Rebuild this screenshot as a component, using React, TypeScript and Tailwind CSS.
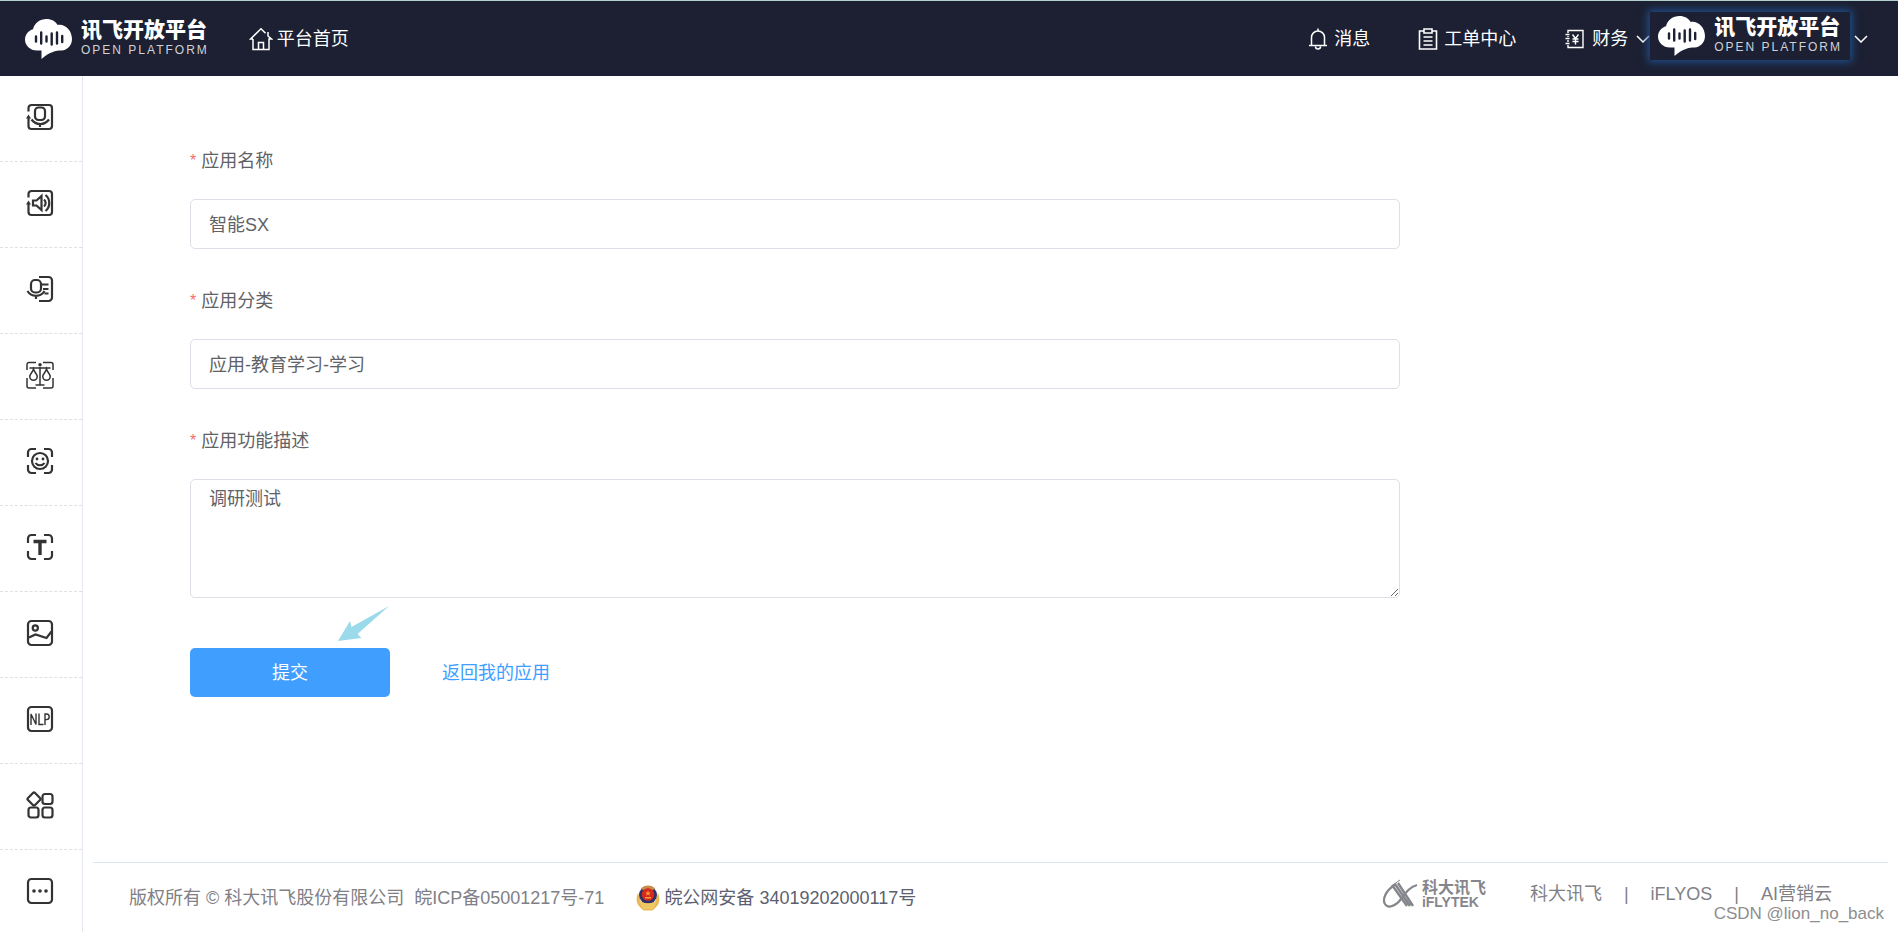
import { useState } from 'react';
import type { ReactNode } from 'react';

const sidebarIcons: { label: string; icon: ReactNode }[] = [
  {
    label: '语音识别',
    icon: (
      <>
        <path d="M2.5 8.5V5a3 3 0 0 1 3-3H23a3 3 0 0 1 3 3v18a3 3 0 0 1-3 3H5.5a3 3 0 0 1-3-3V14" />
        <path d="M0 15.500h5L2.500 11.500z" fill="currentColor" stroke="none" />
        <rect x="9" y="4.500" width="10" height="12.500" rx="3.500" />
        <path d="M5.5 16.5c4.5 6 13 6 17.500 0M14 21v3" />
      </>
    ),
  },
  {
    label: '语音合成',
    icon: (
      <>
        <path d="M2.5 8.5V5a3 3 0 0 1 3-3H23a3 3 0 0 1 3 3v18a3 3 0 0 1-3 3H5.5a3 3 0 0 1-3-3V14" />
        <path d="M0 15.500h5L2.500 11.500z" fill="currentColor" stroke="none" />
        <path d="M7 11.500h3.500l5-4.500v14l-5-4.500H7z" />
        <path d="M18 10.500c2.200 2 2.200 5 0 7M19.500 6c5 4 5 12 0 16" />
      </>
    ),
  },
  {
    label: '语音扩展',
    icon: (
      <>
        <path d="M13 2h9.500A3.500 3.500 0 0 1 26 5.500v17a3.500 3.500 0 0 1-3.500 3.500H13" />
        <rect x="5" y="5" width="10" height="12.500" rx="4" />
        <path d="M1.500 16c4 6.500 13 6.500 17 0M10 20.500V24M16 9.500h6.500M17 14h5.500M18.500 18.500h4" />
      </>
    ),
  },
  {
    label: '评测',
    icon: (
      <g strokeWidth="1.500">
        <path d="M1 9V3.500a2 2 0 0 1 2-2h7M17 1.500h8a2 2 0 0 1 2 2V9M27 17v8a2 2 0 0 1-2 2h-8M10 27H3a2 2 0 0 1-2-2v-8" />
        <path d="M3.500 7h21M14 6v18M9.500 24h9" />
        <circle cx="14" cy="3.700" r="1" fill="currentColor" />
        <path d="M7.500 8c-1 3.500-3.700 5-3.700 7.500a3.700 3.700 0 0 0 7.400 0C11.200 13 8.500 11.500 7.500 8zM20.500 8c-1 3.500-3.700 5-3.700 7.500a3.700 3.700 0 0 0 7.400 0C24.200 13 21.500 11.500 20.500 8z" />
      </g>
    ),
  },
  {
    label: '人脸识别',
    icon: (
      <>
        <path d="M2 10V5.500A3.500 3.500 0 0 1 5.500 2H10M18 2h4.500A3.500 3.500 0 0 1 26 5.500V10M26 18v4.500a3.500 3.500 0 0 1-3.500 3.500H18M10 26H5.500A3.500 3.500 0 0 1 2 22.500V18" />
        <circle cx="14" cy="14" r="8" />
        <path d="M9.500 16c2 3 7 3 9 0" />
        <circle cx="11" cy="12" r="1.400" fill="currentColor" stroke="none" />
        <circle cx="17" cy="12" r="1.400" fill="currentColor" stroke="none" />
      </>
    ),
  },
  {
    label: '文字识别',
    icon: (
      <>
        <path d="M2 10V5.500A3.500 3.500 0 0 1 5.500 2H10M18 2h4.500A3.500 3.500 0 0 1 26 5.500V10M26 18v4.500a3.500 3.500 0 0 1-3.500 3.500H18M10 26H5.500A3.500 3.500 0 0 1 2 22.500V18" />
        <path d="M7.500 8.500h13M14 9v13" strokeWidth="3.400" />
      </>
    ),
  },
  {
    label: '图像识别',
    icon: (
      <>
        <rect x="2" y="2" width="24" height="24" rx="3.500" />
        <circle cx="9.300" cy="9" r="2.600" />
        <path d="M3 18.500l6.500-3L20.500 19l5-6.500" />
      </>
    ),
  },
  {
    label: '自然语言处理',
    icon: (
      <>
        <rect x="2" y="2" width="24" height="24" rx="3.500" />
        <path
          d="M5 20V9l5 10.500V8.500M13 8.500v11h4.500M19 20V9h1.500c3.600 0 3.600 5.600 0 5.600H19"
          strokeWidth="1.400"
        />
      </>
    ),
  },
  {
    label: '更多应用',
    icon: (
      <>
        <rect x="3" y="3" width="10" height="10" rx="1.500" transform="rotate(45 8 8)" />
        <rect x="16.500" y="3" width="10" height="10" rx="2.500" />
        <rect x="2.500" y="16.500" width="10" height="10" rx="2.500" />
        <rect x="16.500" y="16.500" width="10" height="10" rx="2.500" />
      </>
    ),
  },
  {
    label: '更多',
    icon: (
      <>
        <rect x="2" y="2" width="24" height="24" rx="3.500" />
        <g fill="currentColor" stroke="none">
          <circle cx="8" cy="14" r="1.800" />
          <circle cx="14" cy="14" r="1.800" />
          <circle cx="20" cy="14" r="1.800" />
        </g>
      </>
    ),
  },
];

function Logo() {
  return (
    <span className="flex items-center gap-2 text-white">
      <svg viewBox="0 0 48 40" className="h-10 w-12" aria-hidden="true">
        <path
          fill="currentColor"
          d="M16.500 40v-8.500H12C5 31.500 0 26.500 0 20.500c0-5 3.500-9 8-10.300C9.500 4 15 0 21.500 0c5 0 9 2.300 11.200 6C40 4.500 47 11.500 47 20c0 6.500-4.500 11-10.500 11.500C31 31.500 24 33 16.500 40z"
        />
        <path
          stroke="#1c2032"
          strokeWidth="2.400"
          strokeLinecap="round"
          d="M11 17.500v5M16.200 13.500v11M21.500 17.500v5M26.700 14.500v11M32 13.500v11M37.200 17v6"
        />
      </svg>
      <span className="flex flex-col items-start gap-0.5">
        <span className="text-[21px] leading-5 font-black whitespace-nowrap">讯飞开放平台</span>
        <span className="text-[12px] leading-4 tracking-[2px] whitespace-nowrap text-[#d0d1d6]">OPEN PLATFORM</span>
      </span>
    </span>
  );
}

function ChevronDown() {
  return (
    <svg viewBox="0 0 14 8" className="h-2 w-3.5" fill="none" stroke="currentColor" strokeWidth="1.500" aria-hidden="true">
      <path d="M1 1l6 6 6-6" />
    </svg>
  );
}

function Header() {
  return (
    <header className="flex h-19 shrink-0 items-center border-t border-[#b4d0cc] bg-[#1c2032] text-white">
      <a href="#" className="ml-[25px]">
        <Logo />
      </a>
      <a href="#" className="ml-10 flex items-center gap-1 text-lg">
        <svg viewBox="0 0 24 24" className="size-6" fill="none" stroke="currentColor" strokeWidth="1.500" aria-hidden="true">
          <path d="M4 12H1.500L12 1.800l4.500 4.500M19 5v4l3.500 3H20v10.500H4V12M9.500 22v-6.500h5V22" />
        </svg>
        平台首页
      </a>
      <nav className="ml-auto flex items-center text-lg">
        <a href="#" className="flex items-center gap-1.5">
          <svg viewBox="0 0 20 24" className="h-6 w-5" fill="none" stroke="currentColor" strokeWidth="1.500" aria-hidden="true">
            <path d="M1 18.500h18M3.500 18.500v-8a6.500 6.500 0 0 1 13 0v8M10 4V1.500M7.500 19.500a2.500 2.500 0 0 0 5 0" />
          </svg>
          消息
        </a>
        <a href="#" className="ml-12 flex items-center gap-1.5">
          <svg viewBox="0 0 20 24" className="h-6 w-5" fill="none" stroke="currentColor" strokeWidth="1.600" aria-hidden="true">
            <path d="M6 4H1.500v18h17V4H14M6 2h8v4H6zM5.500 10h9M5.500 14h9M5.500 18h9" />
          </svg>
          工单中心
        </a>
        <button type="button" className="ml-12 flex items-center gap-2">
          <svg viewBox="0 0 20 20" className="size-5" fill="none" stroke="currentColor" strokeWidth="1.400" aria-hidden="true">
            <path d="M4 4V1.500h15v17H4V16M4 7v1M4 11v2M1.500 5.500h4M1.500 9.500h4M1.500 14.500h4M8.500 5.500l3 4 3-4M11.500 9.500v6M8.500 10h6M8.500 12.500h6" />
          </svg>
          财务
          <ChevronDown />
        </button>
        <button type="button" className="mr-[30px] flex items-center gap-1">
          <span className="mb-1.5 flex h-12 items-center px-2 shadow-[0_0_8px_2px_#1f4f8f]">
            <Logo />
          </span>
          <ChevronDown />
        </button>
      </nav>
    </header>
  );
}

function Sidebar() {
  return (
    <aside className="w-[83px] shrink-0 border-r border-[#e4e9f0]">
      <ul>
        {sidebarIcons.map((item) => (
          <li
            key={item.label}
            className="h-[86px] border-b border-dashed border-[#e0e0e0] pb-1 last:h-[82px] last:border-b-0 last:pb-0"
          >
            <a href="#" aria-label={item.label} className="flex h-full items-center justify-center pr-0.5 text-[#333]">
              <svg viewBox="0 0 28 28" className="size-7" fill="none" stroke="currentColor" strokeWidth="2.200" aria-hidden="true">
                {item.icon}
              </svg>
            </a>
          </li>
        ))}
      </ul>
    </aside>
  );
}

function FieldLabel({ htmlFor, children }: { htmlFor: string; children: ReactNode }) {
  return (
    <label htmlFor={htmlFor} className="mb-[13px] flex h-[50px] items-center gap-[5px] text-lg">
      <span className="text-base text-[#f56c6c]">*</span>
      {children}
    </label>
  );
}

function AppForm() {
  const [name, setName] = useState('智能SX');
  const [category, setCategory] = useState('应用-教育学习-学习');
  const [desc, setDesc] = useState('调研测试');

  return (
    <form className="mt-15 ml-[107px] w-2/3 text-[#606266]" onSubmit={(e) => e.preventDefault()}>
      <div className="mb-[27px]">
        <FieldLabel htmlFor="name">应用名称</FieldLabel>
        <input
          id="name"
          value={name}
          onChange={(e) => setName(e.target.value)}
          className="block h-[50px] w-full rounded-[5px] border border-[#dcdfe6] px-4.5 pb-0.5 text-lg outline-none"
        />
      </div>
      <div className="mb-[27px]">
        <FieldLabel htmlFor="category">应用分类</FieldLabel>
        <input
          id="category"
          value={category}
          onChange={(e) => setCategory(e.target.value)}
          className="block h-[50px] w-full rounded-[5px] border border-[#dcdfe6] px-4.5 pb-0.5 text-lg outline-none"
        />
      </div>
      <div className="mb-[50px]">
        <FieldLabel htmlFor="desc">应用功能描述</FieldLabel>
        <textarea
          id="desc"
          value={desc}
          onChange={(e) => setDesc(e.target.value)}
          className="block h-[119px] w-full rounded-[5px] border border-[#dcdfe6] px-4.5 py-[5px] text-lg outline-none"
        />
      </div>
      <div className="relative flex items-center">
        <button type="submit" className="h-[49px] w-[200px] rounded-[5px] bg-[#409eff] text-lg text-white">
          提交
        </button>
        <a href="#" className="ml-13 text-lg text-[#409eff]">
          返回我的应用
        </a>
        <svg viewBox="0 0 52 36" className="absolute -top-[42px] left-[148px] h-9 w-[52px]" aria-hidden="true">
          <path fill="#9adaea" d="M0 35L12 15l1.500 6L51 0 19.500 28l4 4z" />
        </svg>
      </div>
    </form>
  );
}

function PoliceBadge() {
  return (
    <svg viewBox="0 0 24 26" className="h-[26px] w-6" aria-hidden="true">
      <path fill="#eab955" d="M2 8c-2 4-2 10 1 13 2 2 3 4 5 4.500h8c2-.5 3-2.500 5-4.500 3-3 3-9 1-13l-3 9H5z" />
      <circle cx="12" cy="10" r="9" fill="#2d3266" />
      <path fill="#c98d4b" d="M5 3.500C8-.5 16-.5 19 3.500L17 5H7z" />
      <circle cx="12" cy="9.500" r="6.300" fill="#d9281c" />
      <path fill="#f2a03c" d="M12 5.500l.8 2h2l-1.600 1.200.6 2L12 9.500l-1.800 1.200.6-2-1.600-1.200h2zM9 12h6v1.500H9z" />
      <path fill="#f0c765" d="M3 16c5 3 13 3 18 0l-4 8H7z" />
    </svg>
  );
}

function IflytekLogo() {
  return (
    <span className="flex items-center gap-1 text-[#85868c]">
      <svg viewBox="0 0 36 30" className="h-7.5 w-9" fill="none" stroke="currentColor" aria-hidden="true">
        <path strokeWidth="2.200" d="M14 5C4 11 0 20 3 25c3 5 11 2 16-5 6-8 9-12 16-14" />
        <path strokeWidth="2.400" d="M10 6l15 21M13 5l15 22M16 4l15 23" />
        <path strokeWidth="1" d="M11 6l7-5" />
      </svg>
      <span className="flex flex-col font-bold whitespace-nowrap">
        <span className="text-base leading-4">科大讯飞</span>
        <span className="text-sm leading-3">iFLYTEK</span>
      </span>
    </span>
  );
}

function Footer() {
  return (
    <footer className="relative mx-2.5 flex h-[70px] items-center border-t border-[#dfe6ee] px-9 text-lg text-[#808086]">
      <span>版权所有 © 科大讯飞股份有限公司</span>
      <a href="#" className="ml-2.5">
        皖ICP备05001217号-71
      </a>
      <a href="#" className="ml-8 flex items-center gap-1 text-[#5c5f70]">
        <PoliceBadge />
        皖公网安备 34019202000117号
      </a>
      <div className="mr-5 mb-2 ml-auto flex items-center">
        <IflytekLogo />
        <a href="#" className="ml-11">
          科大讯飞
        </a>
        <span className="mx-[22px]">|</span>
        <a href="#">iFLYOS</a>
        <span className="mx-[22px]">|</span>
        <a href="#">AI营销云</a>
      </div>
      <span className="absolute right-1 bottom-2 text-[17px] leading-5 text-[#8e8e8e]">CSDN @lion_no_back</span>
    </footer>
  );
}

export default function App() {
  return (
    <div className="flex min-h-screen flex-col bg-white font-['Liberation_Sans','Noto_Sans_CJK_SC',sans-serif]">
      <Header />
      <div className="flex flex-1">
        <Sidebar />
        <main className="flex min-w-0 flex-1 flex-col justify-between">
          <AppForm />
          <Footer />
        </main>
      </div>
    </div>
  );
}
